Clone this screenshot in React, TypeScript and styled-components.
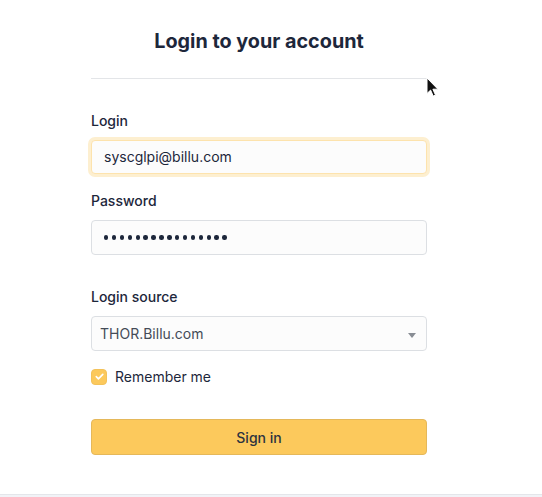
import React from "react";
import styled, { createGlobalStyle } from "styled-components";

const Global = createGlobalStyle`
  html, body { margin: 0; padding: 0; }
  body {
    background: #f1f3f7;
    font-family: Inter, "Noto Sans", "Liberation Sans", sans-serif;
    color: #1d273b;
    -webkit-font-smoothing: antialiased;
  }
`;

const Card = styled.div`
  position: relative;
  height: 495px;
  box-sizing: border-box;
  background: #ffffff;
  border-bottom: 1px solid #e4e6ea;
  padding-top: 28px;
`;

const Form = styled.form`
  width: 336px;
  margin-left: 91px;
  display: flex;
  flex-direction: column;
`;

const Title = styled.h2`
  margin: 0;
  text-align: center;
  font-size: 19.8px;
  font-weight: 700;
  line-height: 26px;
  color: #1d273b;
`;

const Divider = styled.hr`
  margin: 24px 0 0 0;
  border: 0;
  border-top: 1px solid #e3e5e8;
`;

const Field = styled.div<{ $mt: number }>`
  display: flex;
  flex-direction: column;
  margin-top: ${(p) => p.$mt}px;
`;

const Label = styled.label`
  font-size: 14px;
  font-weight: 500;
  line-height: 20px;
  color: #1d273b;
  margin-bottom: 9px;
`;

const Input = styled.input<{ $focus?: boolean }>`
  box-sizing: border-box;
  width: 100%;
  height: 34px;
  padding: 0 12px 1px;
  font-family: inherit;
  font-size: 14px;
  color: #1d273b;
  background: #fcfcfc;
  border: 1px solid ${(p) => (p.$focus ? "#fde3ad" : "#dcdfe3")};
  border-radius: 4px;
  outline: none;
  box-shadow: ${(p) => (p.$focus ? "0 0 0 3px #fdefd0" : "none")};
`;

const Dots = styled.div`
  box-sizing: border-box;
  height: 35px;
  padding: 0 12px;
  display: flex;
  align-items: center;
  gap: 3.5px;
  background: #fcfcfc;
  border: 1px solid #dcdfe3;
  border-radius: 4px;
`;

const Dot = styled.span`
  width: 4.4px;
  height: 4.4px;
  border-radius: 50%;
  background: #1d273b;
`;

const Select = styled.div`
  box-sizing: border-box;
  height: 35px;
  padding: 0 10px 0 8px;
  display: flex;
  align-items: center;
  justify-content: space-between;
  background: #fcfcfc;
  border: 1px solid #dcdfe3;
  border-radius: 4px;
  font-size: 14px;
  color: #444b57;
`;

const Caret = styled.span`
  width: 0;
  height: 0;
  border-left: 4px solid transparent;
  border-right: 4px solid transparent;
  border-top: 5px solid #888d94;
  margin-top: 3px;
`;

const CheckRow = styled.label`
  display: flex;
  align-items: center;
  gap: 8px;
  margin-top: 17px;
  font-size: 14px;
  color: #1d273b;
`;

const Box = styled.span`
  width: 16px;
  height: 16px;
  border-radius: 4px;
  background: #fcc95c;
  border: 1px solid #f3c25a;
  box-sizing: border-box;
  display: flex;
  align-items: center;
  justify-content: center;
`;

const Button = styled.button`
  margin-top: 34px;
  height: 36px;
  width: 100%;
  background: #fcc95c;
  border: 1px solid #e5b85a;
  border-radius: 4px;
  font-family: inherit;
  font-size: 14px;
  font-weight: 500;
  color: #2c3340;
`;

const Pointer = styled.svg`
  position: absolute;
  left: 426px;
  top: 77px;
`;

export default function App() {
  return (
    <>
      <Global />
      <Card>
        <Form onSubmit={(e) => e.preventDefault()}>
          <Title>Login to your account</Title>
          <Divider />
          <Field $mt={32}>
            <Label>Login</Label>
            <Input $focus readOnly value="syscglpi@billu.com" />
          </Field>
          <Field $mt={17}>
            <Label>Password</Label>
            <Dots>
              {Array.from({ length: 16 }).map((_, i) => (
                <Dot key={i} />
              ))}
            </Dots>
          </Field>
          <Field $mt={32}>
            <Label>Login source</Label>
            <Select>
              <span>THOR.Billu.com</span>
              <Caret />
            </Select>
          </Field>
          <CheckRow>
            <Box>
              <svg width="11" height="11" viewBox="0 0 12 12">
                <path d="M2.5 6.2l2.3 2.3 4.8-4.8" fill="none" stroke="#fff" strokeWidth="1.8" strokeLinecap="round" strokeLinejoin="round" />
              </svg>
            </Box>
            Remember me
          </CheckRow>
          <Button type="submit">Sign in</Button>
        </Form>
        <Pointer width="14" height="22" viewBox="0 0 14 22">
          <path d="M1 1v15.5l3.6-3.4 2.6 6 2.3-1-2.6-5.9h5z" fill="#111" stroke="#fff" strokeWidth="1" />
        </Pointer>
      </Card>
    </>
  );
}
